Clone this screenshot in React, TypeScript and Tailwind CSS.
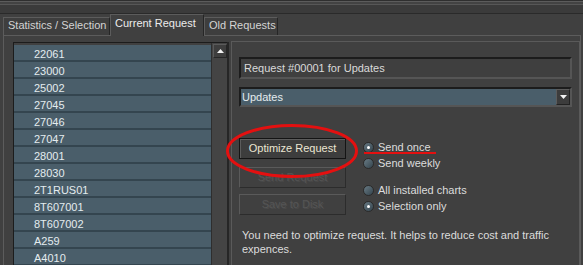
const codes = [
  "22061",
  "23000",
  "25002",
  "27045",
  "27046",
  "27047",
  "28001",
  "28030",
  "2T1RUS01",
  "8T607001",
  "8T607002",
  "A259",
  "A4010",
];

function Tab({ label, width, active }: { label: string; width: string; active?: boolean }) {
  return (
    <div
      className={`flex items-start whitespace-nowrap border-l border-t border-r border-[#5c5c5c] border-r-[#262626] pl-[4px] ${width} ${
        active
          ? "relative z-10 -mb-px h-[22px] bg-[#404040] pt-[2px] text-[#ececec]"
          : "h-[18px] bg-[#3e3e3e] pt-[1px] text-[#d4d4d4]"
      }`}
    >
      {label}
    </div>
  );
}

function Button({ label, disabled }: { label: string; disabled?: boolean }) {
  return (
    <div
      className={`flex h-[21px] w-[107px] items-center justify-center border ${
        disabled
          ? "border-[#5a5a5a] border-b-[#2c2c2c] border-r-[#2c2c2c] bg-[#404040] text-[#555555] [text-shadow:1px_1px_0_#4a4a4a]"
          : "border-[#141414] bg-[#3d3d3d] text-[#ebe6d2] shadow-[inset_1px_1px_0_#5c5c5c]"
      }`}
    >
      {label}
    </div>
  );
}

function Radio({ label, checked }: { label: string; checked?: boolean }) {
  return (
    <div className="flex h-4 items-center">
      <span className="flex h-[11px] w-[11px] items-center justify-center rounded-full border border-[#2a2a2a] bg-gradient-to-br from-[#6a7c86] to-[#34444d]">
        {checked && <span className="h-[3px] w-[3px] rounded-full bg-white" />}
      </span>
      <span className="ml-[4px] text-[#dcdcdc]">{label}</span>
    </div>
  );
}

export default function App() {
  return (
    <div className="relative flex h-[265px] w-[583px] flex-col overflow-hidden bg-[#404040] text-[11px] leading-[13px] [font-family:'Liberation_Sans',Arial,sans-serif]">
      {/* window chrome bands */}
      <div className="h-px shrink-0 bg-[#2f2f2f]" />
      <div className="h-px shrink-0 bg-[#5c5c5c]" />
      <div className="h-[2px] shrink-0 bg-[#434343]" />
      <div className="h-px shrink-0 bg-[#575757]" />
      <div className="h-[8px] shrink-0 bg-[#3b3b3b]" />
      <div className="h-px shrink-0 bg-[#2a2a2a]" />

      {/* tabs */}
      <div className="flex h-[21px] shrink-0 items-end pl-[3px]">
        <Tab label="Statistics / Selection" width="w-[107px]" />
        <Tab label="Current Request" width="w-[94px]" active />
        <Tab label="Old Requests" width="w-[74px]" />
      </div>

      {/* tab page */}
      <div className="ml-[3px] mr-[2px] flex min-h-0 flex-1 border-l border-r border-t border-[#5c5c5c]">
        {/* list */}
        <div className="ml-[9px] mt-[6px] flex w-[214px] border-l border-t border-[#1c1c1c]">
          <div className="flex-1 pt-[2px]">
            {codes.map((c) => (
              <div
                key={c}
                className="h-[17px] border-b-2 border-[#34454f] bg-[#4a5e6a] pl-[20px] pt-[3px] text-[#e4ecef]"
              >
                {c}
              </div>
            ))}
          </div>
          <div className="w-[16px] border-l border-[#2e2e2e] bg-[#444444] pl-px pt-[1px]">
            <div className="flex h-[14px] w-[14px] items-center justify-center border border-[#5a5a5a] border-b-[#262626] border-r-[#262626] bg-[#3e3e3e]">
              <svg width="7" height="4" viewBox="0 0 7 4">
                <path d="M3.5 0 L7 4 L0 4 Z" fill="#f2f2f2" />
              </svg>
            </div>
          </div>
        </div>
        <div className="mt-[6px] w-[2px] bg-[#262626]" />

        {/* right panel */}
        <div className="ml-[2px] mt-[5px] flex-1 border-l border-r border-t border-[#5a5a5a] pl-[7px] pr-[4px] pt-[15px]">
          <div className="flex h-[22px] w-[333px] items-center border-2 border-[#1c1c1c] border-b-[#555] border-r-[#555] bg-[#3f3f3f] pl-[3px] text-[#dadada]">
            Request #00001 for Updates
          </div>
          <div className="mt-[8px] flex h-[20px] w-[333px] items-center justify-between border-2 border-[#1c1c1c] border-b-[#555] border-r-[#555] bg-[#4a5e6a] pl-[1px] text-[#e4ecef]">
            Updates
            <div className="flex h-[16px] w-[14px] items-center justify-center border border-[#5c5c5c] border-b-[#222] border-r-[#222] bg-[#3c3c3c]">
              <svg width="7" height="4" viewBox="0 0 7 4">
                <path d="M0 0 L7 0 L3.5 4 Z" fill="#f2f2f2" />
              </svg>
            </div>
          </div>

          <div className="mt-[31px] flex">
            <div className="flex flex-col">
              <Button label="Optimize Request" />
              <div className="mt-[8px]">
                <Button label="Send Request" disabled />
              </div>
              <div className="mt-[6px]">
                <Button label="Save to Disk" disabled />
              </div>
            </div>
            <div className="ml-[17px] flex flex-col pt-px">
              <Radio label="Send once" checked />
              <Radio label="Send weekly" />
              <div className="h-[11px]" />
              <Radio label="All installed charts" />
              <Radio label="Selection only" checked />
            </div>
          </div>

          <p className="mt-[13px] pl-[3px] leading-[14px] text-[#dcdcdc]">
            You need to optimize request. It helps to reduce cost and traffic
            <br />
            expences.
          </p>
        </div>
      </div>

      {/* red annotations */}
      <svg className="absolute left-[225px] top-[123px]" width="134" height="56" viewBox="0 0 134 56">
        <ellipse cx="67" cy="28" rx="64.5" ry="25.5" fill="none" stroke="#e41010" strokeWidth="3" />
      </svg>
      <div className="absolute left-[364px] top-[152px] h-[2px] w-[72px] bg-[#e41010]" />
    </div>
  );
}
